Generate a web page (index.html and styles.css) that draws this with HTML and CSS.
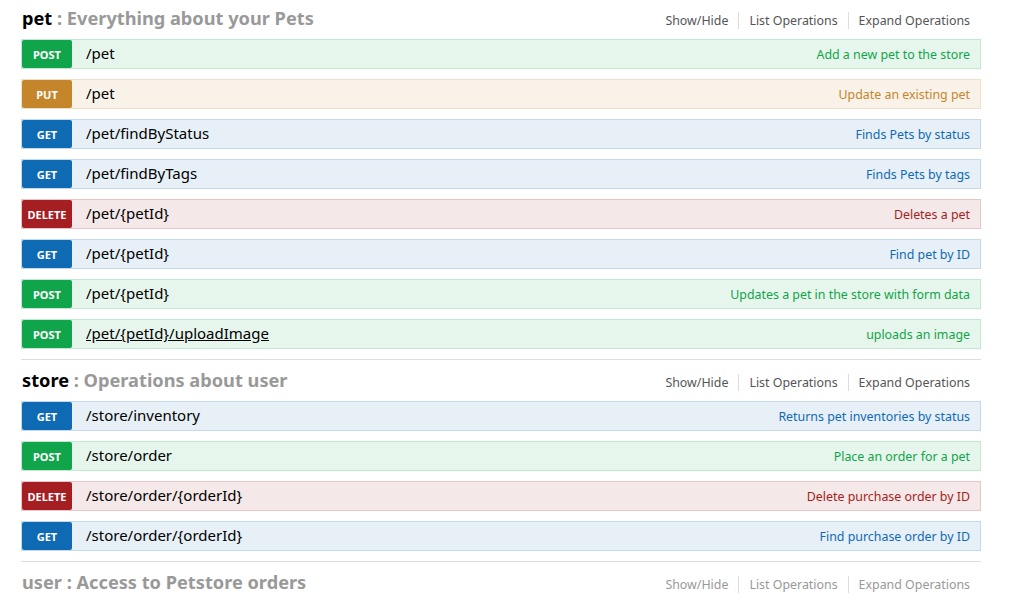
FILE: index.html
```html
<!DOCTYPE html>
<html>
<head>
<meta charset="utf-8">
<link rel="stylesheet" href="styles.css">
</head>
<body>
<div class="resources">
  <section class="resource">
    <div class="heading">
      <h2><span class="tag">pet</span> : Everything about your Pets</h2>
      <ul class="options"><li>Show/Hide</li><li>List Operations</li><li>Expand Operations</li></ul>
    </div>
    <ul class="ops">
      <li class="op post"><span class="method">POST</span><span class="path">/pet</span><span class="desc">Add a new pet to the store</span></li>
      <li class="op put"><span class="method">PUT</span><span class="path">/pet</span><span class="desc">Update an existing pet</span></li>
      <li class="op get"><span class="method">GET</span><span class="path">/pet/findByStatus</span><span class="desc">Finds Pets by status</span></li>
      <li class="op get"><span class="method">GET</span><span class="path">/pet/findByTags</span><span class="desc">Finds Pets by tags</span></li>
      <li class="op delete"><span class="method">DELETE</span><span class="path">/pet/{petId}</span><span class="desc">Deletes a pet</span></li>
      <li class="op get"><span class="method">GET</span><span class="path">/pet/{petId}</span><span class="desc">Find pet by ID</span></li>
      <li class="op post"><span class="method">POST</span><span class="path">/pet/{petId}</span><span class="desc">Updates a pet in the store with form data</span></li>
      <li class="op post"><span class="method">POST</span><span class="path hover">/pet/{petId}/uploadImage</span><span class="desc">uploads an image</span></li>
    </ul>
  </section>
  <section class="resource">
    <div class="heading">
      <h2><span class="tag">store</span> : Operations about user</h2>
      <ul class="options"><li>Show/Hide</li><li>List Operations</li><li>Expand Operations</li></ul>
    </div>
    <ul class="ops">
      <li class="op get"><span class="method">GET</span><span class="path">/store/inventory</span><span class="desc">Returns pet inventories by status</span></li>
      <li class="op post"><span class="method">POST</span><span class="path">/store/order</span><span class="desc">Place an order for a pet</span></li>
      <li class="op delete"><span class="method">DELETE</span><span class="path">/store/order/{orderId}</span><span class="desc">Delete purchase order by ID</span></li>
      <li class="op get"><span class="method">GET</span><span class="path">/store/order/{orderId}</span><span class="desc">Find purchase order by ID</span></li>
    </ul>
  </section>
  <section class="resource faded">
    <div class="heading">
      <h2><span class="tag">user</span> : Access to Petstore orders</h2>
      <ul class="options"><li>Show/Hide</li><li>List Operations</li><li>Expand Operations</li></ul>
    </div>
  </section>
</div>
</body>
</html>
```
FILE: styles.css
```css
* { box-sizing: border-box; }
html, body { margin: 0; padding: 0; background: #fff; }
body { font-family: "Noto Sans", "Open Sans", sans-serif; color: #000; }
.resources { width: 960px; margin: -2px 0 0 21px; }
.resource { border-bottom: 1px solid #ddd; }
.resource.faded { border-bottom: none; }
.heading { height: 41px; display: flex; align-items: center; justify-content: space-between; }
.heading h2 { margin: -2px 0 0 1px; font-size: 18.2px; font-weight: 700; color: #999; }
.heading h2 .tag { color: #000; }
.faded .heading h2 .tag { color: #999; }
.options { list-style: none; margin: 4px 0 0; padding: 0 1px 0 0; display: flex; align-items: center; }
.options li { font-size: 12.4px; color: #555; padding: 0 10px; border-right: 1px solid #ddd; line-height: 17px; }
.options li:last-child { border-right: none; }
.faded .options li { color: #999; }
.ops { list-style: none; margin: 0; padding: 0 0 10px; }
.op { height: 30px; margin-bottom: 10px; border: 1px solid; display: flex; align-items: center; }
.op:last-child { margin-bottom: 0; }
.method { width: 50px; height: 28px; border-radius: 2px; color: #fff; font-size: 11px; font-weight: 700; display: flex; align-items: center; justify-content: center; padding-top: 1px; flex: none; }
.path { margin-left: 14px; font-size: 15px; color: #000; flex: 1; margin-top: -2px; }
.path.hover { text-decoration: underline; }
.desc { font-size: 12.4px; padding-right: 10px; }
.get { background: #e7f0f7; border-color: #c3d9ec; }
.get .method { background: #0f6ab4; }
.get .desc { color: #0f6ab4; }
.post { background: #e7f6ec; border-color: #c3e8d1; }
.post .method { background: #10a54a; }
.post .desc { color: #10a54a; }
.put { background: #f9f2e9; border-color: #f0e0ca; }
.put .method { background: #c5862b; }
.put .desc { color: #c5862b; }
.delete { background: #f5e8e8; border-color: #e8c6c7; }
.delete .method { background: #a41e22; }
.delete .desc { color: #a41e22; }
```
